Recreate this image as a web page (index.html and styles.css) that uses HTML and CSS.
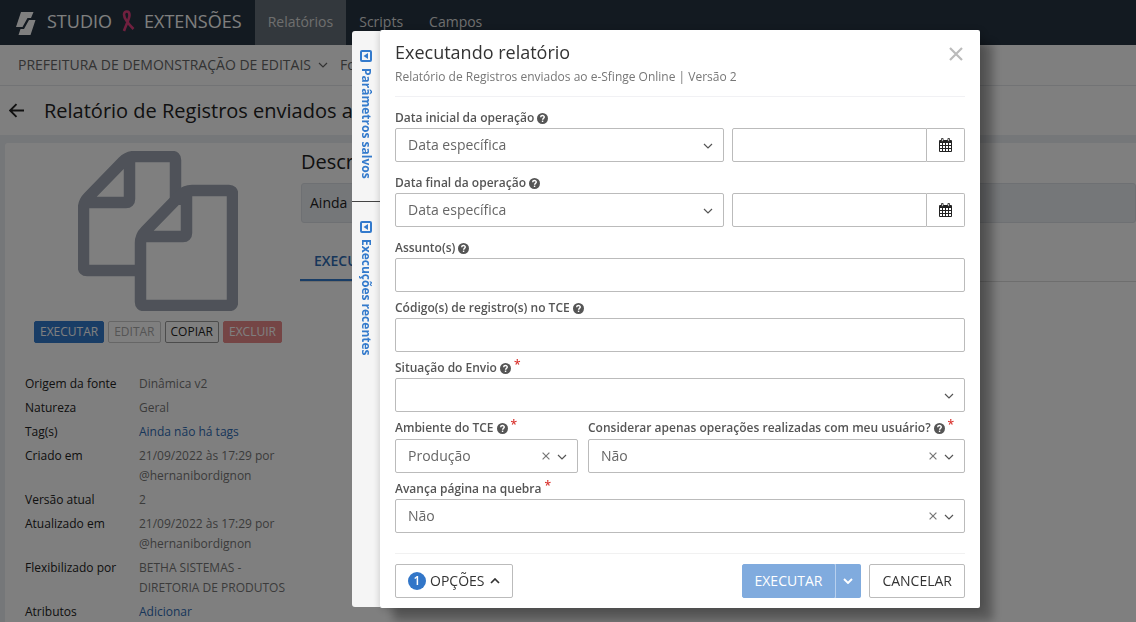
FILE: index.html
```html
<!DOCTYPE html>
<html lang="pt-BR">
<head>
<meta charset="utf-8">
<meta name="viewport" content="width=device-width, initial-scale=1">
<title>Studio Extensões</title>
<link rel="stylesheet" href="styles.css">
</head>
<body>
<svg class="defs" aria-hidden="true">
  <symbol id="chevron" viewBox="0 0 10 6"><path d="M1 1l4 4 4-4" fill="none" stroke="currentColor" stroke-width="1.2"/></symbol>
  <symbol id="cross" viewBox="0 0 8 8"><path d="M.6.6l6.8 6.8M7.4.6L.6 7.4" fill="none" stroke="currentColor" stroke-width="1.2"/></symbol>
  <symbol id="help" viewBox="0 0 10 10"><circle cx="5" cy="5" r="5" fill="currentColor"/><path d="M3.3 3.900C3.400 1.800 6.700 1.800 6.600 3.800 6.500 4.900 5.100 4.900 5.100 6.100" fill="none" stroke="#fff" stroke-width="1.3"/><path d="M4.400 6.900h1.300v1.300H4.400z" fill="#fff"/></symbol>
  <symbol id="calendar" viewBox="0 0 13 14"><path d="M0 3.200Q0 2 1 2h11q1 0 1 1.200V13q0 1-1 1H1q-1 0-1-1z" fill="currentColor"/><path d="M1 5h2v2H1zm3 0h2v2H4zm3 0h2v2H7zm3 0h2v2h-2zM1 8h2v2H1zm3 0h2v2H4zm3 0h2v2H7zm3 0h2v2h-2zM1 11h2v2H1zm3 0h2v2H4zm3 0h2v2H7zm3 0h2v2h-2z" fill="#fff"/><path d="M2.500.5h1.600v3H2.500zM8.900.5h1.600v3H8.900z" fill="#fff" stroke="currentColor" stroke-width=".8"/></symbol>
  <symbol id="panel" viewBox="0 0 12 12"><rect x="1" y="1" width="10" height="10" rx="1" fill="none" stroke="currentColor" stroke-width="2"/><path d="M8 3v6L3.500 6z" fill="currentColor"/></symbol>
</svg>

<header class="topbar">
  <a class="brand" href="#">
    <svg class="brand-logo" viewBox="0 0 20 23" aria-hidden="true"><path d="M5 0H17.500L15 6H11.500L6.500 15H0zM14.500 23H2.500L4.500 17H8L13 8h6.500z" fill="currentColor"/></svg>
    <span>STUDIO</span>
    <svg class="brand-ribbon" viewBox="0 0 14 22" aria-hidden="true"><path d="M3 21C5 15 8.500 9 8.500 5 8.500 .5 3 .5 3 4.500c0 4 4 9 9.500 14.500" fill="none" stroke="#e0407f" stroke-width="2.600"/></svg>
    <span>EXTENSÕES</span>
  </a>
  <nav class="mainnav">
    <a class="active" href="#">Relatórios</a>
    <a href="#">Scripts</a>
    <a href="#">Campos</a>
  </nav>
</header>

<div class="context">
  <button type="button">PREFEITURA DE DEMONSTRAÇÃO DE EDITAIS <svg class="chev"><use href="#chevron"/></svg></button>
  <span>Fo</span>
</div>

<div class="heading">
  <a href="#" aria-label="Voltar"><svg class="back" viewBox="0 0 14 14"><path d="M14 7H1.500M7 1L1 7l6 6" fill="none" stroke="currentColor" stroke-width="1.800"/></svg></a>
  <h1>Relatório de Registros enviados a</h1>
</div>

<main class="page">
  <aside class="summary">
    <svg class="copies" viewBox="0 0 160 160" aria-hidden="true">
      <g fill="none" stroke="currentColor" stroke-width="11.500" stroke-linejoin="round">
        <path d="M62 119.500H9q-3.500 0-3.500-3.500V58q0-7 5-12L45 10.500q5-5 12-5h37q3.500 0 3.500 3.500v45M51.500 6v42q0 3.500-3.500 3.500H7"/>
        <path d="M66 154.500q-3.500 0-3.500-3.500V92q0-7 5-12L102 44.500q5-5 12-5h37q3.500 0 3.500 3.500v108q0 3.500-3.500 3.500zM108.500 40v42q0 3.500-3.500 3.500H64"/>
      </g>
    </svg>
    <div class="actions">
      <button class="mini primary" type="button">EXECUTAR</button>
      <button class="mini" type="button" disabled>EDITAR</button>
      <button class="mini dark" type="button">COPIAR</button>
      <button class="mini danger" type="button">EXCLUIR</button>
    </div>
    <dl class="facts">
      <dt>Origem da fonte</dt><dd>Dinâmica v2</dd>
      <dt>Natureza</dt><dd>Geral</dd>
      <dt>Tag(s)</dt><dd><a href="#">Ainda não há tags</a></dd>
      <dt>Criado em</dt><dd>21/09/2022 às 17:29 por @hernanibordignon</dd>
      <dt>Versão atual</dt><dd>2</dd>
      <dt>Atualizado em</dt><dd>21/09/2022 às 17:29 por @hernanibordignon</dd>
      <dt>Flexibilizado por</dt><dd>BETHA SISTEMAS - DIRETORIA DE PRODUTOS</dd>
      <dt>Atributos</dt><dd><a href="#">Adicionar</a></dd>
    </dl>
  </aside>
  <section class="details">
    <h2>Descrição</h2>
    <p class="well">Ainda</p>
    <div class="tabs"><a href="#">EXECUÇÕES</a></div>
  </section>
</main>

<div class="overlay">
  <div class="dialog" role="dialog" aria-modal="true" aria-labelledby="dialog-title">
    <div class="side">
      <button type="button"><svg><use href="#panel"/></svg>Parâmetros salvos</button>
      <button type="button"><svg><use href="#panel"/></svg>Execuções recentes</button>
    </div>
    <form class="modal">
      <header class="modal-head">
        <div>
          <h2 id="dialog-title">Executando relatório</h2>
          <p>Relatório de Registros enviados ao e-Sfinge Online | Versão 2</p>
        </div>
        <button class="close" type="button" aria-label="Fechar"><svg viewBox="0 0 14 14"><path d="M1 1l12 12M13 1L1 13" stroke="currentColor" stroke-width="2.200"/></svg></button>
      </header>

      <div class="fields">
        <div class="field roomy">
          <label for="start-type">Data inicial da operação <svg class="help"><use href="#help"/></svg></label>
          <div class="daterow">
            <div class="select"><select id="start-type"><option>Data específica</option></select><svg class="chev"><use href="#chevron"/></svg></div>
            <div class="date"><input type="text" aria-label="Data inicial"><button type="button" aria-label="Abrir calendário"><svg><use href="#calendar"/></svg></button></div>
          </div>
        </div>
        <div class="field roomy">
          <label for="end-type">Data final da operação <svg class="help"><use href="#help"/></svg></label>
          <div class="daterow">
            <div class="select"><select id="end-type"><option>Data específica</option></select><svg class="chev"><use href="#chevron"/></svg></div>
            <div class="date"><input type="text" aria-label="Data final"><button type="button" aria-label="Abrir calendário"><svg><use href="#calendar"/></svg></button></div>
          </div>
        </div>
        <div class="field">
          <label for="subject">Assunto(s) <svg class="help"><use href="#help"/></svg></label>
          <input id="subject" type="text">
        </div>
        <div class="field">
          <label for="codes">Código(s) de registro(s) no TCE <svg class="help"><use href="#help"/></svg></label>
          <input id="codes" type="text">
        </div>
        <div class="field">
          <label for="status">Situação do Envio <svg class="help"><use href="#help"/></svg> <span class="req">*</span></label>
          <div class="select"><select id="status"><option></option></select><svg class="chev"><use href="#chevron"/></svg></div>
        </div>
        <div class="pair">
          <div class="field">
            <label for="env">Ambiente do TCE <svg class="help"><use href="#help"/></svg> <span class="req">*</span></label>
            <div class="select"><select id="env"><option>Produção</option></select><button class="clear" type="button" aria-label="Limpar"><svg><use href="#cross"/></svg></button><svg class="chev"><use href="#chevron"/></svg></div>
          </div>
          <div class="field">
            <label for="mine">Considerar apenas operações realizadas com meu usuário? <svg class="help"><use href="#help"/></svg> <span class="req">*</span></label>
            <div class="select"><select id="mine"><option>Não</option></select><button class="clear" type="button" aria-label="Limpar"><svg><use href="#cross"/></svg></button><svg class="chev"><use href="#chevron"/></svg></div>
          </div>
        </div>
        <div class="field">
          <label for="break">Avança página na quebra <span class="req">*</span></label>
          <div class="select"><select id="break"><option>Não</option></select><button class="clear" type="button" aria-label="Limpar"><svg><use href="#cross"/></svg></button><svg class="chev"><use href="#chevron"/></svg></div>
        </div>
      </div>

      <footer class="modal-foot">
        <button class="btn options" type="button"><span class="badge">1</span>OPÇÕES <svg class="chev up" viewBox="0 0 10 6"><path d="M1 5l4-4 4 4" fill="none" stroke="currentColor" stroke-width="1.700"/></svg></button>
        <div class="split">
          <button class="btn run" type="submit">EXECUTAR</button>
          <button class="btn run more" type="button" aria-label="Mais opções"><svg class="chev" viewBox="0 0 10 6"><path d="M1 1l4 4 4-4" fill="none" stroke="currentColor" stroke-width="1.900"/></svg></button>
        </div>
        <button class="btn" type="button">CANCELAR</button>
      </footer>
    </form>
  </div>
</div>
</body>
</html>
```
FILE: styles.css
```css
* { box-sizing: border-box; }
body {
  display: flex;
  flex-direction: column;
  margin: 0;
  height: 100vh;
  overflow: hidden;
  background: #ebeef2;
  color: #222;
  font: 14px/20px "Open Sans", sans-serif;
}
h1, h2, p, dl, dd { margin: 0; font-weight: 400; }
a { color: #2f6cb5; text-decoration: none; }
button, input, select { font: inherit; color: inherit; }
button { padding: 0; border: 0; background: none; }
svg { display: block; flex: none; }
.defs { position: absolute; width: 0; height: 0; }
.chev { width: 10px; height: 6px; }

/* Page chrome */
.topbar { display: flex; flex: none; height: 45px; background: #263442; }
.brand {
  display: flex;
  align-items: center;
  padding: 0 13px 4px 16px;
  color: #fff;
  font-size: 18px;
}
.brand-logo { width: 20px; height: 23px; margin: 5px 11px 0 0; }
.brand-ribbon { width: 14px; height: 22px; margin: 0 9px; }
.mainnav { display: flex; }
.mainnav a { padding: 12px 13px; color: #ddd; }
.mainnav .active { background: #67717a; }
.context {
  display: flex;
  flex: none;
  align-items: center;
  gap: 12px;
  height: 41px;
  padding-left: 18px;
  border-bottom: 1px solid #e4e6ea;
  background: #fff;
  color: #666;
}
.context button { display: flex; align-items: center; gap: 7px; }
.heading {
  display: flex;
  flex: none;
  align-items: center;
  gap: 20px;
  height: 49px;
  padding-left: 9px;
  background: #fff;
}
.heading a { color: #222; }
.heading h1 { font-size: 20px; white-space: nowrap; }
.back { width: 15px; height: 15px; }

.page {
  display: grid;
  flex: 1;
  grid-template-columns: 295px 1fr;
  min-height: 0;
  margin: 8px 0 0 5px;
  overflow: hidden;
  border-radius: 3px 0 0;
  background: #fff;
}
.summary { padding-top: 8px; }
.copies { width: 160px; height: 160px; margin-left: 73px; color: #9ea5b2; }
.actions { display: flex; gap: 4px; margin: 10px 0 0 29px; }
.mini {
  height: 22px;
  padding: 0 5px;
  border: 1px solid #ccc;
  border-radius: 2px;
  color: #222;
  font-size: 12px;
  line-height: 18px;
}
.mini:disabled { color: #aaa; }
.mini.dark { border-color: #999; }
.mini.primary { border-color: #337acc; background: #337acc; color: #fff; }
.mini.danger { border-color: #eb8a8a; background: #eb8a8a; color: #fff; }
.facts {
  display: grid;
  grid-template-columns: 102px 160px;
  gap: 4px 12px;
  margin: 31px 0 0 20px;
  font-size: 12px;
}
.facts dd { color: #777; }
.details h2 { padding: 6px 0 0 1px; font-size: 20px; line-height: 26px; }
.well {
  margin: 8px 0 0 1px;
  padding: 9px 8px;
  border: 1px solid #dde1e6;
  border-radius: 3px;
  background: #ebeef2;
}
.tabs { display: flex; margin-top: 20px; border-bottom: 1px solid #ddd; }
.tabs a { padding: 8px 14px; border-bottom: 2px solid #337acc; font-weight: 600; }

/* Dialog */
.overlay {
  position: fixed;
  inset: 0;
  display: flex;
  justify-content: flex-end;
  align-items: flex-start;
  padding: 30px 156px 0 24px;
  background: rgba(0, 0, 0, .5);
}
.dialog { display: flex; width: 100%; max-width: 628px; }
.side {
  display: flex;
  flex: none;
  flex-direction: column;
  width: 28px;
  margin: 1px 0;
  border-radius: 3px 0 0 3px;
  background: linear-gradient(to right, #f5f5f5 22px, #ececec);
}
.side button {
  display: flex;
  align-items: center;
  gap: 6px;
  width: 100%;
  padding: 19px 0 22px;
  color: #337acc;
  font-size: 12px;
  font-weight: 700;
  writing-mode: vertical-rl;
}
.side button + button { border-top: 1px solid #444; }
.side svg { width: 12px; height: 12px; }
.modal {
  flex: 1;
  padding: 0 15px 10px;
  border-radius: 2px;
  background: #fff;
  box-shadow: 13px 13px 10px rgba(0, 0, 0, .3), 2px 2px 10px rgba(0, 0, 0, .2);
}
.modal-head {
  display: flex;
  justify-content: space-between;
  align-items: flex-start;
  height: 67px;
  padding-top: 10px;
  border-bottom: 1px solid #f1f1f4;
}
.modal-head h2 { color: #333; font-size: 18px; line-height: 25px; }
.modal-head p { margin-top: 2px; color: #777; font-size: 12px; }
.close { margin-top: 7px; padding: 0 2px; color: #bbb; }
.close svg { width: 14px; height: 14px; }
.fields { display: flex; flex-direction: column; gap: 6px; padding: 11px 0 20px; }
.field.roomy { margin-bottom: 5px; }
.field label {
  display: flex;
  align-items: center;
  gap: 3px;
  height: 20px;
  color: #555;
  font-size: 12px;
  font-weight: 600;
  white-space: nowrap;
}
.pair label { margin-bottom: 1px; }
.help { width: 11px; height: 11px; }
.req { align-self: flex-start; color: #d9332e; font-size: 12px; line-height: 14px; }
.field input, .field select {
  display: block;
  width: 100%;
  height: 34px;
  padding: 0 12px;
  border: 1px solid #bbb;
  border-radius: 2px;
  background: #fff;
  color: #666;
  appearance: none;
}
.select { position: relative; }
.select .chev { position: absolute; top: 15px; right: 11px; color: #555; pointer-events: none; }
.clear { position: absolute; top: 13px; right: 28px; color: #777; }
.clear svg { width: 8px; height: 8px; }
.daterow { display: grid; grid-template-columns: 329fr 233fr; gap: 8px; }
.date { display: flex; }
.date input { border-radius: 2px 0 0 2px; }
.date button {
  flex: none;
  width: 38px;
  padding: 0 12px;
  border: 1px solid #bbb;
  border-left: 0;
  border-radius: 0 2px 2px 0;
  color: #222;
}
.date svg { width: 13px; height: 14px; }
.pair { display: grid; grid-template-columns: 183fr 377fr; gap: 10px; }
.modal-foot {
  display: flex;
  gap: 8px;
  padding-top: 10px;
  border-top: 1px solid #f1f1f1;
}
.btn {
  display: flex;
  align-items: center;
  height: 34px;
  padding: 0 12px;
  border: 1px solid #bbb;
  border-radius: 2px;
  color: #333;
}
.options { gap: 4px; margin-right: auto; }
.badge {
  width: 18px;
  border-radius: 9px;
  background: #3276c8;
  color: #fff;
  font-size: 12px;
  font-weight: 600;
  line-height: 18px;
}
.up { margin-left: 2px; }
.split { display: flex; }
.run { border-color: #80abde; border-radius: 2px 0 0 2px; background: #80abde; color: #fff; }
.run.more { padding: 0 7px; border-left-color: #b8d0ee; border-radius: 0 2px 2px 0; }
```
